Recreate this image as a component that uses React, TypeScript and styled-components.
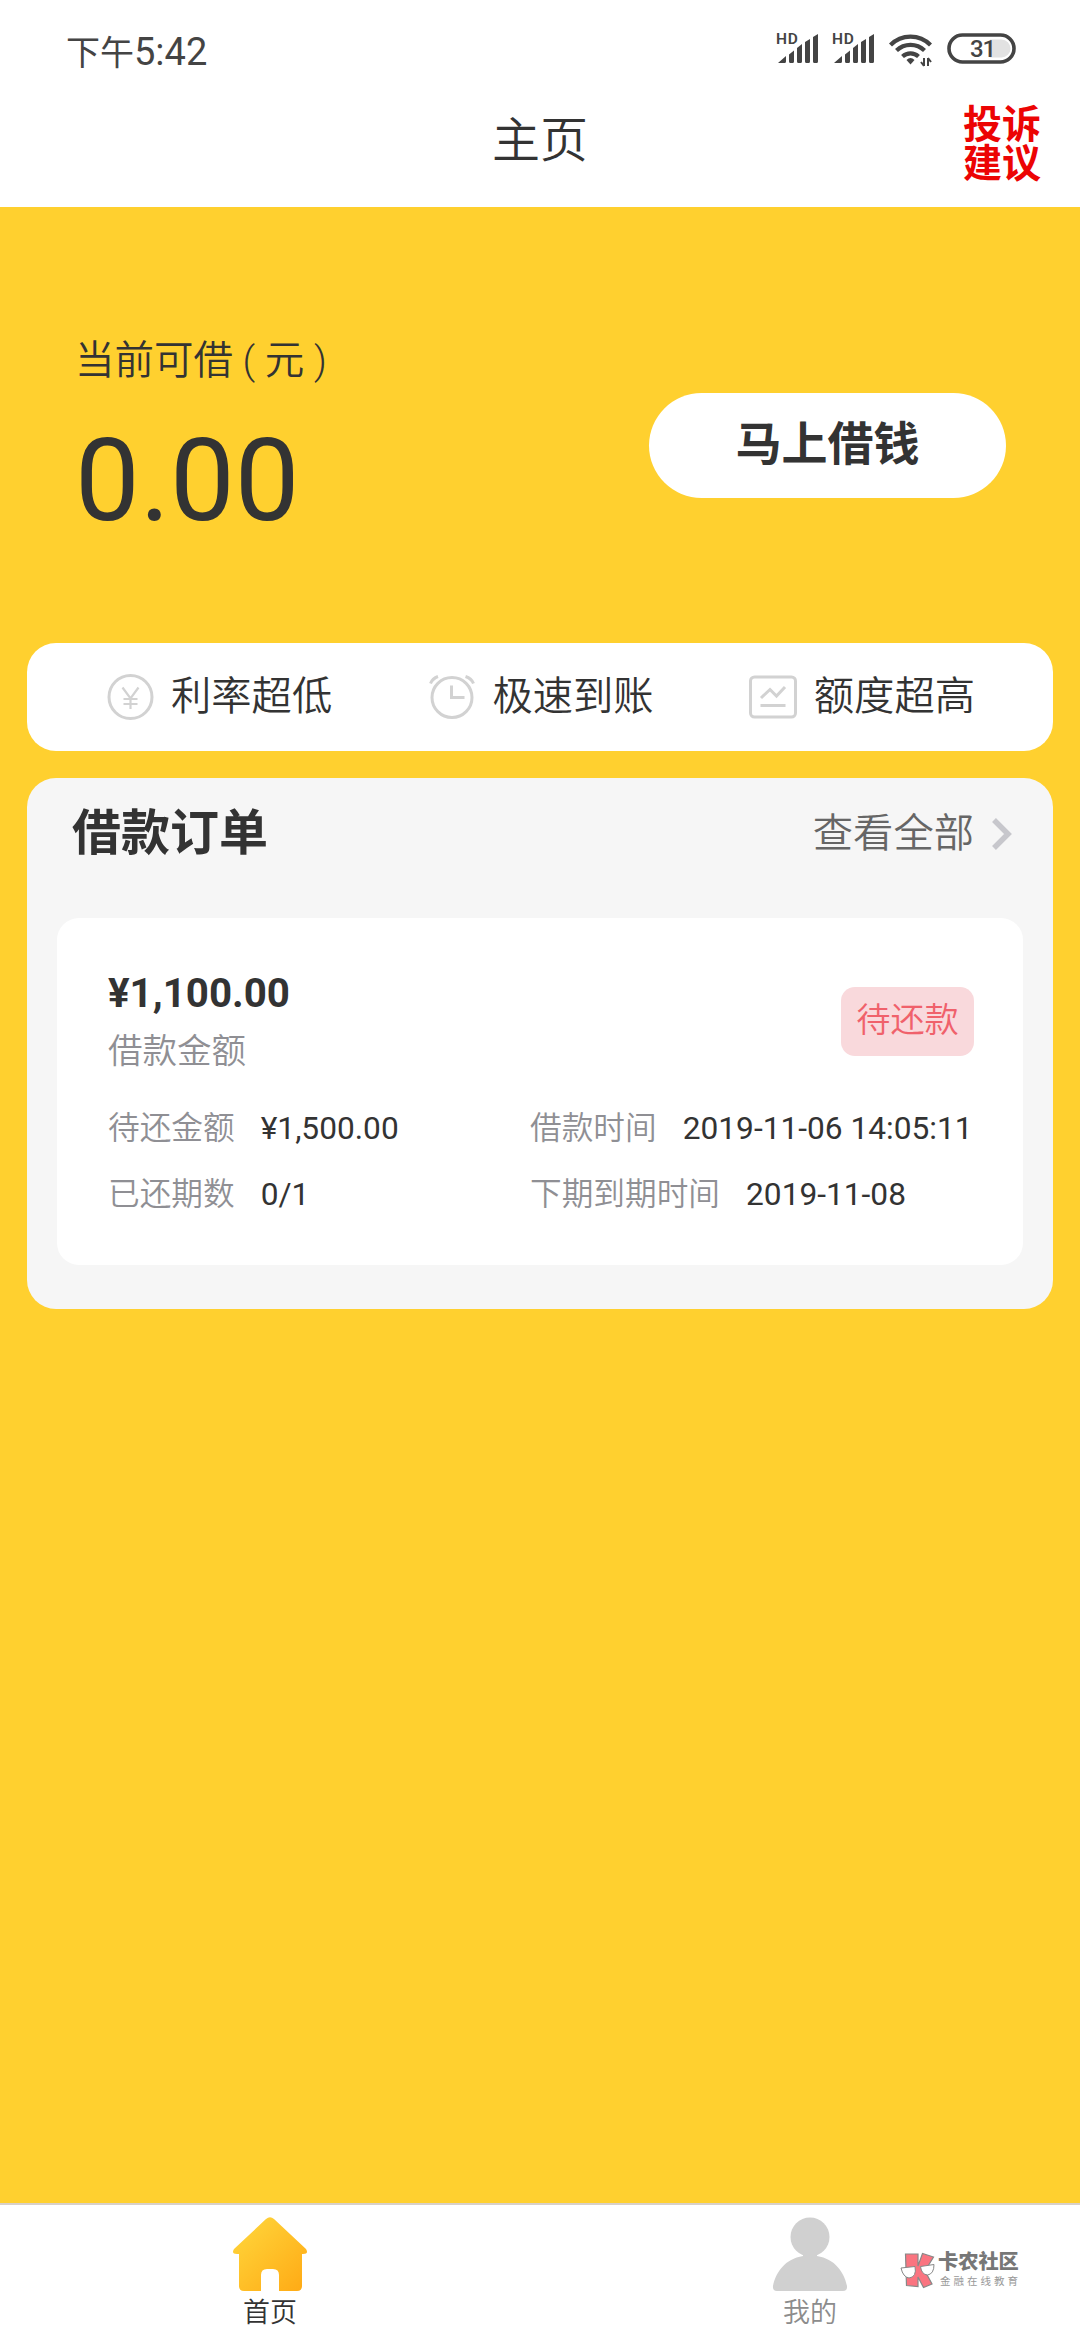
import React from 'react';
import styled, { createGlobalStyle } from 'styled-components';

const GlobalStyle = createGlobalStyle`
  * { box-sizing: border-box; }
  body {
    margin: 0;
    background: #ffd02f;
    font-family: Roboto, "Noto Sans CJK SC", sans-serif;
    color: #333;
  }
`;

const Screen = styled.div`
  width: 1080px;
  height: 2340px;
  display: flex;
  flex-direction: column;
  background: #ffd02f;
  white-space: nowrap;
  overflow: hidden;
`;

const Header = styled.header`
  height: 207px;
  background: #fff;
  display: flex;
  flex-direction: column;
`;

const StatusBar = styled.div`
  height: 98px;
  padding: 0 62px 0 66px;
  display: flex;
  justify-content: space-between;
  align-items: center;
`;

const Clock = styled.div`
  font-size: 38px;
  line-height: 44px;
  color: #444;
  padding-top: 6px;
`;

const Period = styled.span`
  font-size: 34px;
`;

const StatusIcons = styled.svg`
  width: 242px;
  height: 40px;
  display: block;
`;

const TitleBar = styled.div`
  height: 109px;
  display: grid;
  grid-template-columns: 1fr auto 1fr;
  padding: 0 39px;
`;

const Title = styled.h1`
  grid-column: 2;
  margin: 0;
  font-size: 48px;
  font-weight: 350;
  line-height: 86px;
`;

const Complaint = styled.div`
  justify-self: end;
  padding-top: 8px;
  width: 78px;
  font-size: 39px;
  line-height: 38.5px;
  font-weight: 700;
  color: #ec0404;
  white-space: normal;
`;

const Hero = styled.section`
  height: 436px;
  padding: 0 74px 0 75px;
  display: flex;
  justify-content: space-between;
`;

const Quota = styled.div`
  padding-top: 129px;
`;

const QuotaLabel = styled.div`
  font-size: 39.5px;
  font-weight: 350;
  line-height: 50px;
`;

const QuotaAmount = styled.div`
  font-size: 115.2px;
  line-height: 134px;
  margin-top: 28px;
`;

const BorrowButton = styled.button`
  margin: 186px 0 0;
  width: 357px;
  height: 105px;
  border: 0;
  border-radius: 53px;
  background: #fff;
  color: #333;
  font: 700 46px/96px Roboto, "Noto Sans CJK SC", sans-serif;
  padding: 0 0 3px;
`;

const Features = styled.section`
  height: 108px;
  margin: 0 27px;
  padding: 0 78px 0 78px;
  border-radius: 29px;
  background: #fff;
  display: flex;
  align-items: center;
  justify-content: space-between;
`;

const Feature = styled.div`
  display: flex;
  align-items: center;
  gap: 16px;
  font-size: 40.3px;
  font-weight: 350;
  line-height: 50px;
`;

const FeatureIcon = styled.svg`
  width: 50px;
  height: 50px;
  fill: none;
  stroke: #d2d2d2;
  stroke-width: 3;
`;

const Orders = styled.section`
  height: 531px;
  margin: 27px 27px 0;
  padding: 0 30px;
  border-radius: 29px;
  background: #f6f6f6;
`;

const OrdersHead = styled.div`
  height: 140px;
  padding: 28px 11px 0 15px;
  display: flex;
  justify-content: space-between;
  align-items: flex-start;
`;

const OrdersTitle = styled.h2`
  margin: 0;
  font-size: 49px;
  line-height: 56px;
  font-weight: 700;
`;

const SeeAll = styled.div`
  display: flex;
  align-items: center;
  gap: 17px;
  font-size: 40.3px;
  font-weight: 350;
  line-height: 56px;
  color: #666;
`;

const Chevron = styled.svg`
  width: 21px;
  height: 34px;
  fill: none;
  stroke: #c7c7cc;
  stroke-width: 5.5;
`;

const OrderCard = styled.article`
  height: 347px;
  border-radius: 22px;
  background: #fff;
  padding: 52px 49px 0 51px;
`;

const OrderTop = styled.div`
  display: flex;
  justify-content: space-between;
  height: 126px;
`;

const Amount = styled.div`
  font-size: 40.3px;
  line-height: 48px;
  font-weight: 700;
`;

const AmountLabel = styled.div`
  font-size: 34.5px;
  font-weight: 350;
  line-height: 44px;
  margin-top: 11px;
  color: #8f8f94;
`;

const StatusTag = styled.div`
  width: 133px;
  height: 69px;
  margin-top: 17px;
  border-radius: 14px;
  background: #f9d9dc;
  color: #f0616b;
  font-size: 34.2px;
  font-weight: 350;
  line-height: 67px;
  text-align: center;
`;

const Details = styled.dl`
  margin: 0;
  display: grid;
  grid-template-columns: 422px auto;
  grid-auto-rows: 66px;
`;

const Detail = styled.div`
  display: flex;
  gap: 26px;
  font-size: 31.68px;
  line-height: 66px;
`;

const DetailLabel = styled.dt`
  font-weight: 350;
  color: #8f8f94;
`;

const DetailValue = styled.dd`
  margin: 0;
`;

const TabBar = styled.nav`
  height: 137px;
  margin-top: auto;
  border-top: 2px solid #d8d0c8;
  background: #fff;
  display: grid;
  grid-template-columns: 1fr 1fr;
  position: relative;
`;

const Tab = styled.div<{ $active?: boolean }>`
  display: flex;
  flex-direction: column;
  align-items: center;
  padding-top: 11px;
  font-size: 27px;
  font-weight: 350;
  line-height: 34px;
  color: ${(p) => (p.$active ? '#333' : '#8c8c8c')};
`;

const TabIcon = styled.svg`
  width: 76px;
  height: 77px;
  margin-bottom: 3px;
`;

const Watermark = styled.div`
  position: absolute;
  left: 900px;
  top: 47px;
  display: flex;
  gap: 3px;
`;

const WatermarkLogo = styled.svg`
  width: 35px;
  height: 37px;
`;

const WatermarkName = styled.div`
  font-size: 20.2px;
  line-height: 21px;
  font-weight: 900;
  color: #777;
`;

const WatermarkSlogan = styled.div`
  font-size: 10.5px;
  line-height: 12px;
  letter-spacing: 3px;
  padding: 3px 0 0 2px;
  color: #999;
`;

const features = [
  {
    text: '利率超低',
    icon: (
      <>
        <circle cx="25.500" cy="25" r="21.500" />
        <path d="M17.500 15.500 25.500 26.500 33.500 15.500M25.500 26.500V37M18.500 27H32.500M18.500 32H32.500" strokeWidth="2.200" />
      </>
    ),
  },
  {
    text: '极速到账',
    icon: (
      <>
        <circle cx="26" cy="25.5" r="20" />
        <path d="M25.5 13.5V25.5H38.5M4.5 11.5Q6.5 6.5 12 4.5M39.500 4.500Q45.500 6.500 47.500 11.500" />
      </>
    ),
  },
  {
    text: '额度超高',
    icon: (
      <>
        <rect x="2.500" y="5" width="45" height="40" rx="4" />
        <path d="M13 26 22 17.500 28.500 24 37 15M12.500 33.500H37.500" />
      </>
    ),
  },
];

const details = [
  ['待还金额', '¥1,500.00'],
  ['借款时间', '2019-11-06 14:05:11'],
  ['已还期数', '0/1'],
  ['下期到期时间', '2019-11-08'],
];

const Signal = ({ x }: { x: number }) => (
  <g transform={`translate(${x} 0)`}>
    <text x="-1" y="15.500" fontSize="15.5" fontWeight="600" fontFamily="Roboto" letterSpacing="0.8">HD</text>
    <path d="M1 35 9 28V33.500Q9 35 7.500 35ZM12 26.500 17 22.500V33.500Q17 35 15.500 35H13.500Q12 35 12 33.500ZM20 20 25 16V33.500Q25 35 23.500 35H21.500Q20 35 20 33.500ZM28 14 33 11V33.500Q33 35 31.500 35H29.500Q28 35 28 33.500ZM36 9 41 6V33.500Q41 35 39.500 35H37.500Q36 35 36 33.500Z" />
  </g>
);

const StatusGlyphs = () => (
  <StatusIcons viewBox="0 1 242 40" fill="#444">
    <Signal x={1} />
    <Signal x={57} />
    <g fill="none" stroke="#444" strokeWidth="4.200">
      <path d="M114.500 17A28 28 0 0 1 154.500 17" />
      <path d="M120.500 22.500A20 20 0 0 1 148.500 22.500" />
      <path d="M126.500 28.500A12 12 0 0 1 142.500 28.500" />
    </g>
    <path d="M130.500 32Q134.500 28 138.500 32L134.500 36.500Z" />
    <path d="M148 30V38M148 38 145 34M152 38V30M152 30 155 34" fill="none" stroke="#444" strokeWidth="2" />
    <path d="M214 11.500H225.500A9 9 0 0 1 225.500 29.500H214Z" fill="#e2e2e2" />
    <rect x="173" y="7" width="65" height="27" rx="13.500" fill="none" stroke="#444" strokeWidth="3.600" />
    <text x="194" y="29" fontSize="24" fontWeight="500" fontFamily="Roboto" letterSpacing="-1.200">31</text>
  </StatusIcons>
);

export default function App() {
  return (
    <Screen>
      <GlobalStyle />
      <Header>
        <StatusBar>
          <Clock><Period>下午</Period>5:42</Clock>
          <StatusGlyphs />
        </StatusBar>
        <TitleBar>
          <Title>主页</Title>
          <Complaint>投诉<br />建议</Complaint>
        </TitleBar>
      </Header>

      <Hero>
        <Quota>
          <QuotaLabel>当前可借 ( 元 )</QuotaLabel>
          <QuotaAmount>0.00</QuotaAmount>
        </Quota>
        <BorrowButton>马上借钱</BorrowButton>
      </Hero>

      <Features>
        {features.map((f) => (
          <Feature key={f.text}>
            <FeatureIcon viewBox="0 0 50 50">{f.icon}</FeatureIcon>
            {f.text}
          </Feature>
        ))}
      </Features>

      <Orders>
        <OrdersHead>
          <OrdersTitle>借款订单</OrdersTitle>
          <SeeAll>
            查看全部
            <Chevron viewBox="0 0 21 34"><path d="M3 3 17 17 3 31" /></Chevron>
          </SeeAll>
        </OrdersHead>
        <OrderCard>
          <OrderTop>
            <div>
              <Amount>¥1,100.00</Amount>
              <AmountLabel>借款金额</AmountLabel>
            </div>
            <StatusTag>待还款</StatusTag>
          </OrderTop>
          <Details>
            {details.map(([label, value]) => (
              <Detail key={label}>
                <DetailLabel>{label}</DetailLabel>
                <DetailValue>{value}</DetailValue>
              </Detail>
            ))}
          </Details>
        </OrderCard>
      </Orders>

      <TabBar>
        <Tab $active>
          <TabIcon viewBox="0 0 76 77">
            <defs>
              <linearGradient id="house" x1="0" y1="0" x2="1" y2="1">
                <stop offset="0.200" stopColor="#ffcf35" />
                <stop offset="1" stopColor="#ffa914" />
              </linearGradient>
            </defs>
            <path
              d="M34 3Q38 -0.500 42 3L74 33Q77 38 71 38H70V70Q70 75 65 75H47V59Q47 53 41 53H35Q29 53 29 59V75H12Q7 75 7 70V38H5Q-1 38 2 33Z"
              fill="url(#house)"
            />
          </TabIcon>
          首页
        </Tab>
        <Tab>
          <TabIcon viewBox="0 0 76 77" fill="#d0d0d0">
            <circle cx="38" cy="21" r="19.500" />
            <path d="M31 36H45V40C63 43 72 56 75 70Q75.500 75 71 75H5Q0.500 75 1 70C4 56 13 43 31 40Z" />
          </TabIcon>
          我的
        </Tab>
        <Watermark>
          <WatermarkLogo viewBox="0 0 35 37">
            <g fill="#fa7480" stroke="#888" strokeWidth="1.200">
              <path d="M5.500 2H18V14L22.500 1.500 33.500 5 25 19 32 32 23.500 35.500 18 25V34.500L6.500 33.500Z" />
            </g>
            <g fill="#fff" stroke="#888" strokeWidth="1">
              <path d="M1 16 15 14.500Q17 25 9 26Q3 25 1 16Z" />
              <path d="M20.500 14.500 34 12.500Q34 22 27.500 23Q21.500 22.500 20.500 14.500Z" />
            </g>
          </WatermarkLogo>
          <div>
            <WatermarkName>卡农社区</WatermarkName>
            <WatermarkSlogan>金融在线教育</WatermarkSlogan>
          </div>
        </Watermark>
      </TabBar>
    </Screen>
  );
}
